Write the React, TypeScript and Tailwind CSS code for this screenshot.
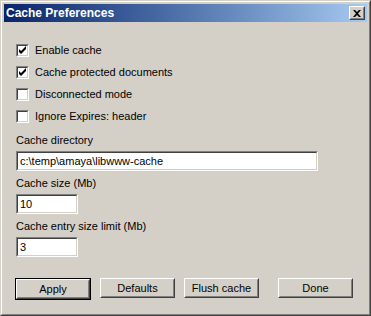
import React from 'react'

const font = { fontFamily: '"Liberation Sans", Arial, sans-serif' }

function Sunken({ className, children }: { className?: string; children?: React.ReactNode }) {
  return (
    <div className={`border border-t-[#808080] border-l-[#808080] border-b-white border-r-white ${className ?? ''}`}>
      <div className="h-full w-full border border-t-[#404040] border-l-[#404040] border-b-[#d4d0c8] border-r-[#d4d0c8] bg-white">
        {children}
      </div>
    </div>
  )
}

function CheckRow({ label, checked }: { label: string; checked?: boolean }) {
  return (
    <div className="flex h-[22px] items-center">
      <Sunken className="h-[13px] w-[13px] shrink-0">
        {checked && (
          <svg width="9" height="9" viewBox="0 0 9 9" className="block">
            <path d="M1 3v3l2 2 5-5V0L3 5z" fill="#000" />
          </svg>
        )}
      </Sunken>
      <span className="ml-[6px] text-[11px] leading-[13px] text-black">{label}</span>
    </div>
  )
}

function Field({ value, width }: { value: string; width: string }) {
  return (
    <Sunken className={`mt-[4px] h-[20px] ${width}`}>
      <div className="flex h-full items-center pl-[2px] text-[11px] leading-[13px] text-black">{value}</div>
    </Sunken>
  )
}

function Button({ label, isDefault }: { label: string; isDefault?: boolean }) {
  const inner = (
    <div className="border border-t-white border-l-white border-b-[#404040] border-r-[#404040]">
      <div className="flex h-[18px] items-center justify-center border border-t-[#d4d0c8] border-l-[#d4d0c8] border-b-[#808080] border-r-[#808080] text-[11px] text-black">
        {label}
      </div>
    </div>
  )
  if (isDefault) return <div className="w-[76px] border border-black">{inner}</div>
  return <div className="w-[75px]">{inner}</div>
}

export default function App() {
  return (
    <div style={font} className="h-[316px] w-[371px] border border-t-[#d4d0c8] border-l-[#d4d0c8] border-b-[#404040] border-r-[#404040] bg-[#d4d0c8]">
      <div className="h-full border border-t-white border-l-white border-b-[#808080] border-r-[#808080] p-[2px]">
        {/* title bar */}
        <div className="flex h-[18px] items-center justify-between bg-gradient-to-r from-[#0a246a] to-[#a6caf0] pl-[2px] pr-[2px]">
          <span className="text-[12px] font-bold leading-[14px] text-white">Cache Preferences</span>
          <div className="border border-t-white border-l-white border-b-[#404040] border-r-[#404040]">
            <div className="flex h-[12px] w-[14px] items-center justify-center border border-t-[#d4d0c8] border-l-[#d4d0c8] border-b-[#808080] border-r-[#808080] bg-[#d4d0c8]">
              <svg width="8" height="7" viewBox="0 0 8 7" className="block">
                <path d="M0 0h2l2 2 2-2h2L5 3.5 8 7H6L4 5 2 7H0l3-3.5z" fill="#000" />
              </svg>
            </div>
          </div>
        </div>

        <div className="flex flex-col pl-[12px] pt-[17px]">
          <CheckRow label="Enable cache" checked />
          <CheckRow label="Cache protected documents" checked />
          <CheckRow label="Disconnected mode" />
          <CheckRow label="Ignore Expires: header" />

          <div className="mt-[7px] text-[11px] leading-[13px] text-black">Cache directory</div>
          <Field value={'c:\\temp\\amaya\\libwww-cache'} width="w-[302px]" />
          <div className="mt-[6px] text-[11px] leading-[13px] text-black">Cache size (Mb)</div>
          <Field value="10" width="w-[62px]" />
          <div className="mt-[6px] text-[11px] leading-[13px] text-black">Cache entry size limit (Mb)</div>
          <Field value="3" width="w-[62px]" />

          <div className="mt-[21px] flex items-start gap-[9px]">
            <div className="-ml-[1px]"><Button label="Apply" isDefault /></div>
            <Button label="Defaults" />
            <Button label="Flush cache" />
            <div className="ml-[10px]"><Button label="Done" /></div>
          </div>
        </div>
      </div>
    </div>
  )
}
